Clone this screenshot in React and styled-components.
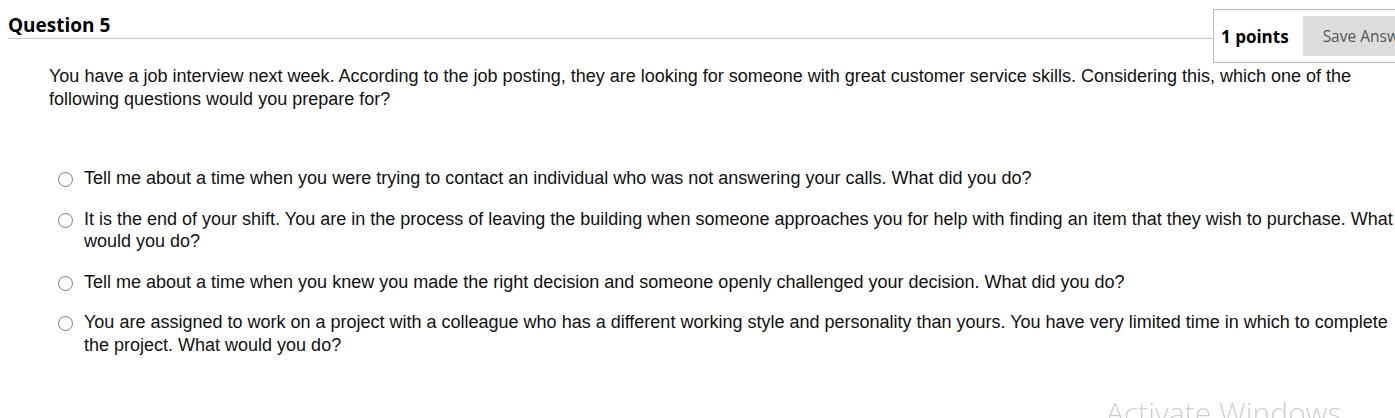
import React from "react";
import styled, { createGlobalStyle } from "styled-components";

const options = [
  "Tell me about a time when you were trying to contact an individual who was not answering your calls. What did you do?",
  "It is the end of your shift. You are in the process of leaving the building when someone approaches you for help with finding an item that they wish to purchase. What would you do?",
  "Tell me about a time when you knew you made the right decision and someone openly challenged your decision. What did you do?",
  "You are assigned to work on a project with a colleague who has a different working style and personality than yours. You have very limited time in which to complete the project. What would you do?",
];

const App = () => {
  return (
    <Page>
      <GlobalStyle />
      <Header>
        <Title>Question 5</Title>
        <PointsBox>
          <Points>1 points</Points>
          <SaveButton>Save Answer</SaveButton>
        </PointsBox>
      </Header>
      <Prompt>
        You have a job interview next week. According to the job posting, they are looking for
        someone with great customer service skills. Considering this, which one of the following
        questions would you prepare for?
      </Prompt>
      <OptionList>
        {options.map((text, i) => (
          <Option key={i}>
            <Radio type="radio" name="q5" />
            <OptionText>{text}</OptionText>
          </Option>
        ))}
      </OptionList>
      <Watermark>Activate Windows</Watermark>
    </Page>
  );
};

const GlobalStyle = createGlobalStyle`
  html {
    overflow: hidden;
  }
  body {
    margin: 8px 0 0 8px;
    background: #fff;
    font-family: "Liberation Sans", Arial, sans-serif;
    color: #111;
  }
  #root {
    overflow: visible;
  }
`;

const Page = styled.div`
  width: 1394px;
`;

const Header = styled.div`
  display: flex;
  align-items: flex-start;
`;

const Title = styled.h3`
  flex: 1;
  margin: 0;
  height: 30px;
  border-bottom: 1px solid #c8c8c8;
  font-family: "Open Sans", sans-serif;
  font-weight: 700;
  font-size: 19px;
  line-height: 34px;
  color: #000;
`;

const PointsBox = styled.div`
  display: flex;
  align-items: center;
  flex-shrink: 0;
  margin-top: 1px;
  height: 52px;
  width: 240px;
  margin-right: -60px;
  padding: 0 0 0 7px;
  border: 1px solid #bdbdbd;
  background: #fff;
`;

const Points = styled.span`
  font-family: "Open Sans", sans-serif;
  font-weight: 700;
  font-size: 17px;
  color: #000;
  margin-right: 14px;
`;

const SaveButton = styled.button`
  height: 40px;
  padding: 0 20px;
  border: none;
  background: #dcdcdc;
  font-family: "Open Sans", sans-serif;
  font-size: 15.5px;
  color: #555;
  white-space: nowrap;
`;

const Prompt = styled.p`
  margin: 2px 0 0;
  padding-left: 41px;
  font-size: 18px;
  line-height: 22.5px;
`;

const OptionList = styled.ul`
  list-style: none;
  margin: 57px 0 0;
  padding: 0 0 0 50px;
  display: flex;
  flex-direction: column;
  gap: 18px;
`;

const Option = styled.li`
  display: flex;
  align-items: flex-start;
`;

const Radio = styled.input`
  appearance: none;
  flex-shrink: 0;
  width: 15px;
  height: 15px;
  margin: 5px 11px 0 0;
  border: 1.5px solid #7a7a7a;
  border-radius: 50%;
  background: #fff;
`;

const OptionText = styled.span`
  font-size: 18px;
  line-height: 22.5px;
`;

const Watermark = styled.div`
  position: fixed;
  left: 1106px;
  top: 392px;
  font-family: "Open Sans", sans-serif;
  font-weight: 300;
  font-size: 30px;
  color: rgba(0, 0, 0, 0.2);
  white-space: nowrap;
  pointer-events: none;
`;

export default App;
